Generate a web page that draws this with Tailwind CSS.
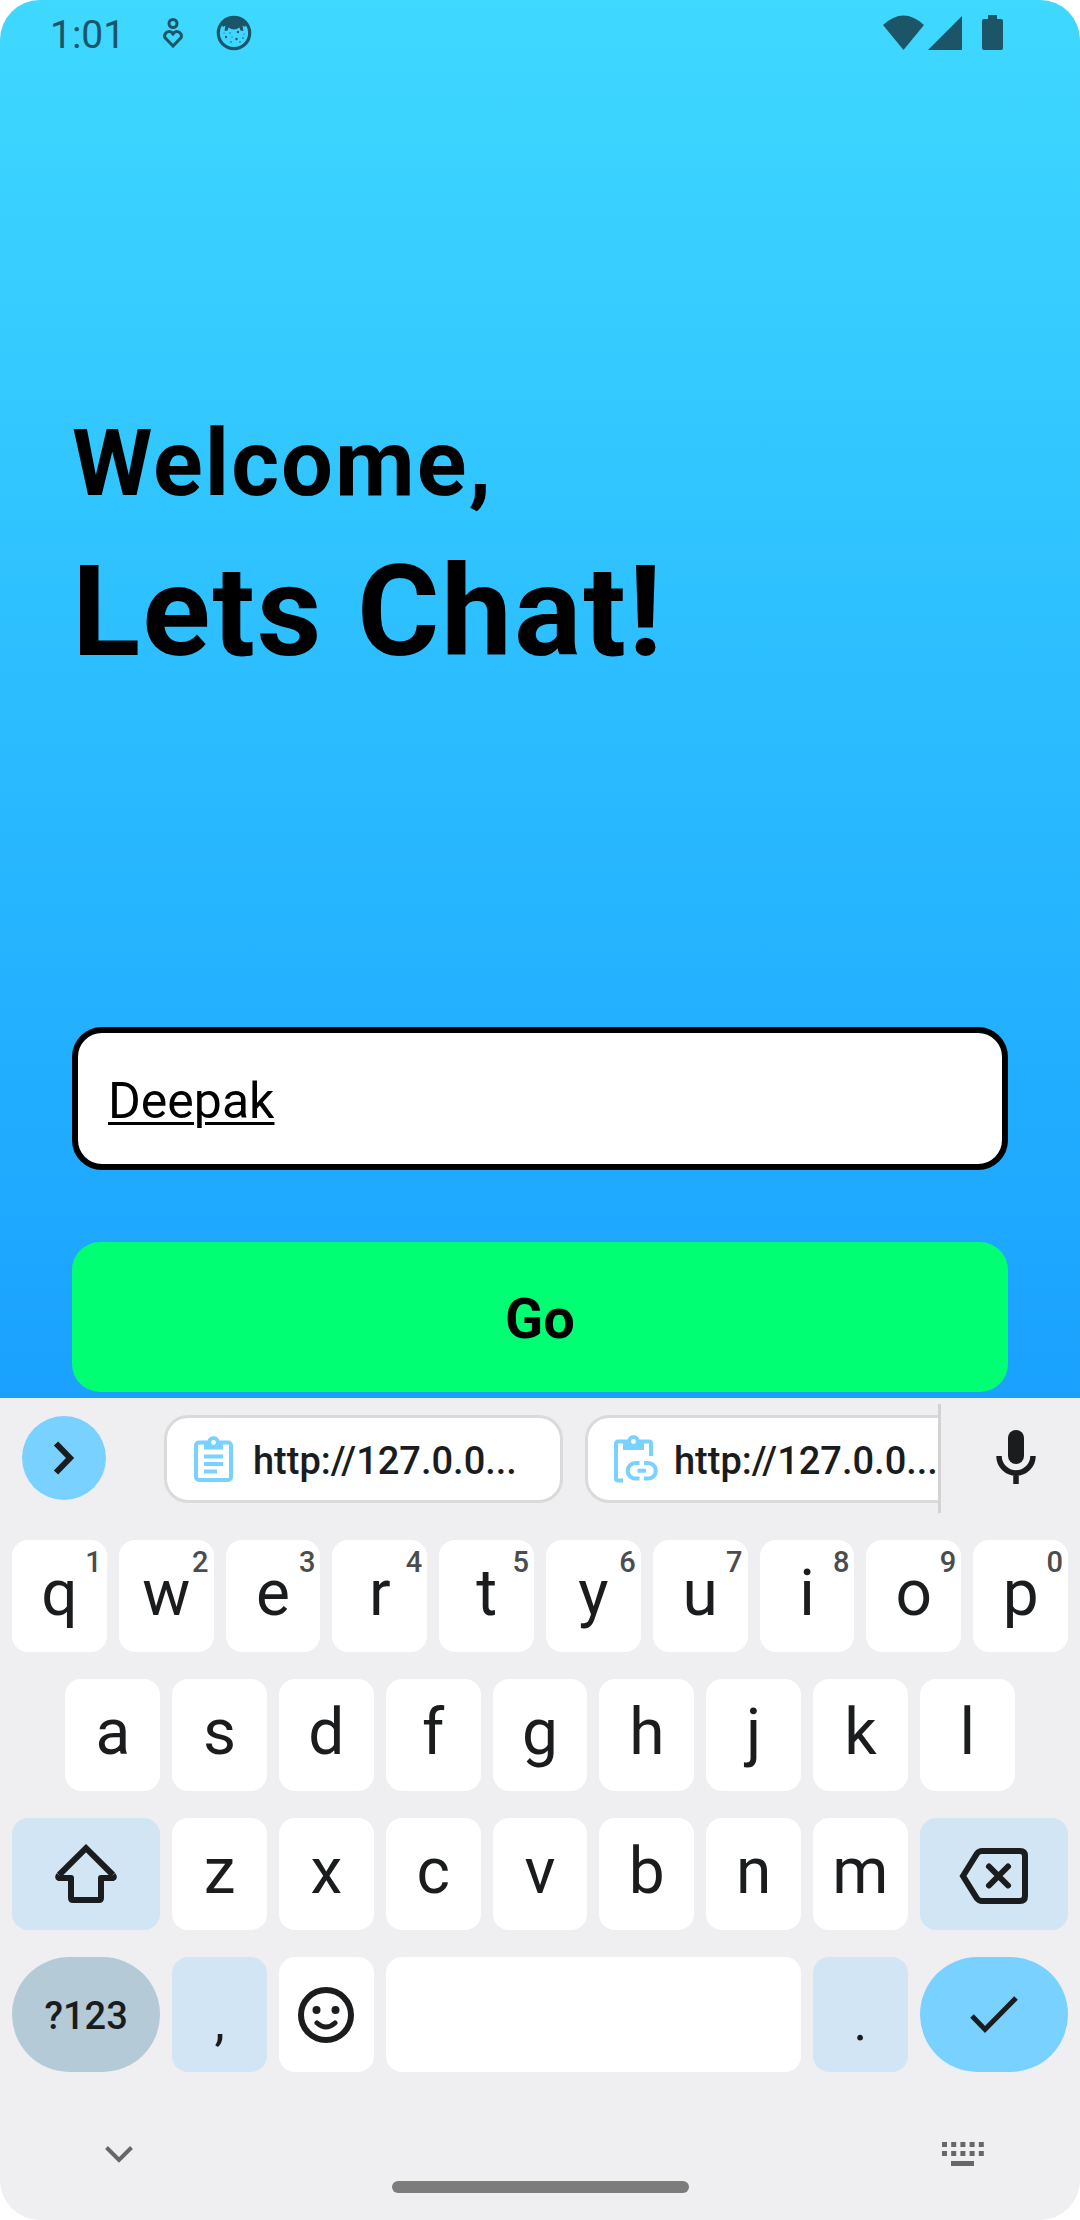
<!DOCTYPE html>
<html lang="en">
<head>
<meta charset="utf-8">
<meta name="viewport" content="width=device-width, initial-scale=1">
<title>Lets Chat</title>
<script src="https://cdn.jsdelivr.net/npm/@tailwindcss/browser@4"></script>
</head>
<body class="bg-white font-['Roboto',sans-serif]">
<div class="flex min-h-screen flex-col overflow-hidden rounded-[40px] bg-[#efeff1]">

  <main class="flex flex-col bg-linear-to-b from-[#3fd8ff] to-[#1aa1ff] pb-[6px]">
    <!-- Status bar -->
    <header class="flex h-[66px] items-center px-[50px] text-[#1b5567]">
      <time class="pt-[4px] text-[39px] leading-[64px]">1:01</time>
      <svg class="ml-[36px] h-[32px] w-[24px]" viewBox="0 0 24 32" fill="none" stroke="currentColor" stroke-width="3" aria-hidden="true">
        <circle cx="12" cy="6.500" r="4"/>
        <path d="M12 29 L3.800 20.500 A4.600 4.600 0 0 1 10.200 15 L12 17 L13.800 15 A4.600 4.600 0 0 1 20.200 20.500 Z"/>
      </svg>
      <svg class="ml-[31px] h-[36px] w-[36px]" viewBox="0 0 36 36" aria-hidden="true">
        <circle cx="18" cy="18" r="15.700" fill="none" stroke="currentColor" stroke-width="3.200"/>
        <path fill="currentColor" d="M5 8 L18 1 L31 8 L29 12 L26.500 10.500 L27.500 16 L24.500 15.500 L23.500 12.500 Q18 16.500 12.500 12.500 L11.500 15.500 L8.500 16 L9.500 10.500 L7 12 Z"/>
        <g fill="currentColor"><circle cx="10" cy="22" r="1.200"/><circle cx="22" cy="17" r="1.200"/><circle cx="20.500" cy="24" r="1.200"/><circle cx="27" cy="23" r=".8"/><circle cx="14" cy="18" r=".7"/><circle cx="15" cy="27" r=".8"/><circle cx="8" cy="18" r=".6"/><circle cx="28" cy="19" r=".6"/><circle cx="24" cy="27" r=".7"/><circle cx="16" cy="22" r=".6"/></g>
      </svg>
      <svg class="mr-[25px] ml-auto h-[36px] w-[122px]" viewBox="0 0 122 36" fill="currentColor" aria-hidden="true">
        <path d="M0 10 Q20.500 -9 41 10 L20.500 35 Z"/>
        <path d="M45 35 L79 1 V35 Z"/>
        <path d="M105 0 h9 v4 h4 a2 2 0 0 1 2 2 v27 a2 2 0 0 1 -2 2 h-17 a2 2 0 0 1 -2 -2 v-27 a2 2 0 0 1 2 -2 h4 Z"/>
      </svg>
    </header>

    <form class="flex flex-col px-[72px]">
      <h1 class="mt-[343px] font-bold text-black">
        <span class="block text-[92px] leading-[110px] tracking-[2px]">Welcome,</span>
        <span class="mt-[20px] block text-[126px] leading-[146px] tracking-[2px]">Lets Chat!</span>
      </h1>
      <input aria-label="Your name" value="Deepak" class="mt-[342px] h-[143px] w-full rounded-[30px] border-[6px] border-black bg-white px-[30px] pt-[4px] text-[50px] text-black underline decoration-[3px] underline-offset-[4px] outline-none">
      <button type="button" class="mt-[72px] h-[150px] w-full rounded-[28px] bg-[#00ff73] pt-[4px] text-[56px] font-bold text-black">Go</button>
    </form>
  </main>

  <section aria-label="Keyboard" class="flex flex-col text-[#1a1c1e]">
    <!-- Clipboard suggestions -->
    <div class="flex h-[142px] items-start">
      <button aria-label="More tools" class="mt-[18px] ml-[22px] flex size-[84px] shrink-0 items-center justify-center rounded-full bg-[#78d1ff]">
        <svg class="h-[34px] w-[22px]" viewBox="0 0 22 34" fill="none" stroke="currentColor" stroke-width="6"><path d="M3 2.500 L17 17 L3 31.500"/></svg>
      </button>
      <div class="mt-[6px] ml-[58px] flex h-[109px] min-w-0 flex-1 items-start gap-[22px] overflow-hidden border-r-[3px] border-[#d3d3d5] pt-[11px]">
        <button class="flex h-[88px] w-[399px] shrink-0 items-center rounded-[24px] border-[3px] border-[#dadadb] bg-white pl-[27px] text-[38px] font-medium">
          <svg class="h-[46px] w-[39px] shrink-0 text-[#78d1ff]" viewBox="0 0 39 46" fill="none" stroke="currentColor" stroke-width="4"><rect x="2" y="6.500" width="35" height="37.500" rx="3"/><path d="M10 20.500h19M10 28h19M10 35.500h13"/><path fill="currentColor" stroke="none" d="M10 5 h3.500 a6.200 6.200 0 0 1 12 0 H29 v8.500 H10 Z"/><circle cx="19.500" cy="6.500" r="2.400" fill="#fff" stroke="none"/></svg>
          <span class="ml-[20px] pt-[4px]">http://127.0.0...</span>
        </button>
        <button class="flex h-[88px] w-[399px] shrink-0 items-center rounded-[24px] border-[3px] border-[#dadadb] bg-white pl-[26px] text-[38px] font-medium">
          <svg class="h-[48px] w-[44px] shrink-0 text-[#78d1ff]" viewBox="0 0 44 48" fill="none" stroke="currentColor" stroke-width="4"><path d="M9 45.500H4a2 2 0 0 1-2-2V8.500a2 2 0 0 1 2-2h31a2 2 0 0 1 2 2V21"/><path fill="currentColor" stroke="none" d="M9 5 h4.500 a6.200 6.200 0 0 1 12 0 H30 v10 H9 Z"/><circle cx="19.500" cy="6.500" r="2.400" fill="#fff" stroke="none"/><path d="M25.500 28h-4a7.800 7.800 0 0 0 0 15.600h4M30 28h4a7.800 7.800 0 0 1 0 15.600h-4M23.500 35.800h8.500"/></svg>
          <span class="ml-[16px] pt-[4px]">http://127.0.0...</span>
        </button>
      </div>
      <button aria-label="Voice input" class="mt-[18px] mr-[23px] ml-[34px] flex size-[82px] shrink-0 items-center justify-center">
        <svg class="h-[54px] w-[40px]" viewBox="0 0 40 54"><rect x="12" y="0" width="16" height="34" rx="8" fill="currentColor"/><path d="M3 26a17 17 0 0 0 34 0M20 43v11" fill="none" stroke="currentColor" stroke-width="5.500"/></svg>
      </button>
    </div>

    <!-- Keys -->
    <div id="keys" class="grid grid-cols-[repeat(20,minmax(0,1fr))] gap-x-[12px] gap-y-[27px] px-[12px]"></div>

    <div class="mt-[62px] flex items-start justify-between px-[96px] text-[#666768]">
      <button aria-label="Hide keyboard" class="flex h-[40px] w-[45px] items-center justify-center"><svg class="h-[17px] w-[28px]" viewBox="0 0 28 17" fill="none" stroke="currentColor" stroke-width="4"><path d="M1.500 1.500 L14 14 L26.500 1.500"/></svg></button>
      <button aria-label="Switch keyboard" class="flex h-[40px] w-[42px] items-center"><svg class="h-[24px] w-[42px]" viewBox="0 0 42 24" fill="none" stroke="currentColor" stroke-width="5"><path stroke-dasharray="5 4.200" d="M0 2.500h42M0 11.500h42"/><path d="M9 21.500h23"/></svg></button>
    </div>
    <div class="mx-auto mt-[7px] mb-[27px] h-[12px] w-[297px] rounded-full bg-[#7c7c7c]"></div>
  </section>
</div>

<script>
const letter = (c, cls, hint) =>
  `<button class="relative col-span-2 ${cls} h-[112px] rounded-[16px] bg-white pb-[4px] text-[64px] leading-[80px]">${c}${hint ? `<span class="absolute top-[4px] right-[5px] text-[29px] leading-[36px] font-medium text-[#4a4c4e]">${hint}</span>` : ''}</button>`;
const row = (s, first = '', hints = '') => [...s].map((c, i) => letter(c, i ? '' : first, hints[i])).join('');
const icon = (label, cls, svg) => `<button aria-label="${label}" class="flex items-center justify-center ${cls}">${svg}</button>`;

document.getElementById('keys').innerHTML =
  row('qwertyuiop', '', '1234567890') +
  row('asdfghjkl', 'col-start-2') +
  icon('Shift', 'col-start-1 col-span-3 h-[112px] rounded-[16px] bg-[#d2e5f4]',
    '<svg class="h-[60px] w-[62px]" viewBox="0 0 62 60" fill="none" stroke="currentColor" stroke-width="6" stroke-linejoin="round"><path stroke-linejoin="miter" d="M4 31 L31 4.200 L58 31"/><path d="M4 31 Q2 34 5 34 H16 V54 Q16 56 18 56 H44 Q46 56 46 54 V34 H57 Q60 34 58 31"/></svg>') +
  row('zxcvbnm') +
  icon('Backspace', 'col-span-3 h-[112px] rounded-[16px] bg-[#d2e5f4] pt-[4px]',
    '<svg class="h-[56px] w-[70px]" viewBox="0 0 70 56" fill="none" stroke="currentColor" stroke-width="6" stroke-linecap="round"><path d="M4 28 L18 5.500 Q20 3 23 3 H61 Q66 3 66 8 V48 Q66 53 61 53 H23 Q20 53 18 50.500 Z"/><path d="M30 18.500 L49 37.500 M49 18.500 L30 37.500"/></svg>') +
  '<button class="col-span-3 h-[115px] rounded-[58px] bg-[#b4cad7] pt-[4px] text-[38px] font-medium">?123</button>' +
  '<button class="col-span-2 h-[115px] rounded-[16px] bg-[#d2e5f4] pt-[16px] text-[52px]">,</button>' +
  icon('Emoji', 'col-span-2 h-[115px] rounded-[16px] bg-white',
    '<svg class="h-[56px] w-[56px]" viewBox="0 0 56 56" fill="none" stroke="currentColor" stroke-width="6" stroke-linecap="round"><circle cx="28" cy="28" r="25"/><path stroke-width="5" d="M19 36 Q28 44 37 36"/><g fill="currentColor" stroke="none"><circle cx="18.500" cy="23" r="4"/><circle cx="37.500" cy="23" r="4"/></g></svg>') +
  '<button aria-label="Space" class="col-span-8 h-[115px] rounded-[16px] bg-white"></button>' +
  '<button class="col-span-2 h-[115px] rounded-[16px] bg-[#d2e5f4] pt-[16px] text-[52px]">.</button>' +
  icon('Done', 'col-span-3 h-[115px] rounded-[58px] bg-[#78d1ff]',
    '<svg class="h-[38px] w-[48px]" viewBox="0 0 48 38" fill="none" stroke="currentColor" stroke-width="5"><path d="M2 20 L15 33.500 L46 2"/></svg>');
</script>
</body>
</html>
